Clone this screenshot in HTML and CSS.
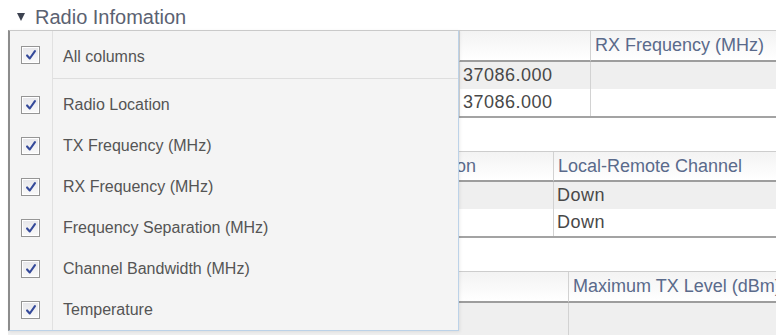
FILE: index.html
```html
<!DOCTYPE html>
<html lang="en">
  <head>
    <meta charset="UTF-8" />
    <meta name="viewport" content="width=device-width, initial-scale=1.0" />
    <title>Radio Information</title>
    <link rel="stylesheet" href="styles.css">
  </head>
  <body>
    <div class="page">
      <div class="section-title">
        <span class="caret"></span>Radio Infomation
      </div>

      <div class="section-body">
        <div class="grid grid-freq">
          <div class="th"></div>
          <div class="th"></div>
          <div class="th">RX Frequency (MHz)</div>
          <div class="td odd"></div>
          <div class="td odd">37086.000</div>
          <div class="td odd"></div>
          <div class="td"></div>
          <div class="td">37086.000</div>
          <div class="td"></div>
        </div>

        <div class="grid grid-sep">
          <div class="th"></div>
          <div class="th">Frequency Separation</div>
          <div class="th">Local-Remote Channel</div>
          <div class="td odd"></div>
          <div class="td odd"></div>
          <div class="td odd">Down</div>
          <div class="td"></div>
          <div class="td"></div>
          <div class="td">Down</div>
        </div>

        <div class="grid grid-level">
          <div class="th"></div>
          <div class="th">Maximum TX Level (dBm)</div>
          <div class="td odd"></div>
          <div class="td odd"></div>
        </div>

        <!-- column chooser dropdown, lies over the tables -->
        <div class="col-menu">
          <div class="opt opt-all">
            <span class="box-cell"><span class="check"><svg viewBox="0 0 16 16"><path d="M3.5 8.5 L6.6 12 L12.5 3.5" /></svg></span></span>
            <span class="label-cell">All columns</span>
          </div>
          <div class="opt-gap"></div>
          <div class="opt">
            <span class="box-cell"><span class="check"><svg viewBox="0 0 16 16"><path d="M3.5 8.5 L6.6 12 L12.5 3.5" /></svg></span></span>
            <span class="label-cell">Radio Location</span>
          </div>
          <div class="opt">
            <span class="box-cell"><span class="check"><svg viewBox="0 0 16 16"><path d="M3.5 8.5 L6.6 12 L12.5 3.5" /></svg></span></span>
            <span class="label-cell">TX Frequency (MHz)</span>
          </div>
          <div class="opt">
            <span class="box-cell"><span class="check"><svg viewBox="0 0 16 16"><path d="M3.5 8.5 L6.6 12 L12.5 3.5" /></svg></span></span>
            <span class="label-cell">RX Frequency (MHz)</span>
          </div>
          <div class="opt">
            <span class="box-cell"><span class="check"><svg viewBox="0 0 16 16"><path d="M3.5 8.5 L6.6 12 L12.5 3.5" /></svg></span></span>
            <span class="label-cell">Frequency Separation (MHz)</span>
          </div>
          <div class="opt">
            <span class="box-cell"><span class="check"><svg viewBox="0 0 16 16"><path d="M3.5 8.5 L6.6 12 L12.5 3.5" /></svg></span></span>
            <span class="label-cell">Channel Bandwidth (MHz)</span>
          </div>
          <div class="opt">
            <span class="box-cell"><span class="check"><svg viewBox="0 0 16 16"><path d="M3.5 8.5 L6.6 12 L12.5 3.5" /></svg></span></span>
            <span class="label-cell">Temperature</span>
          </div>
        </div>
      </div>
    </div>
  </body>
</html>
```

FILE: styles.css
```css
* {
  box-sizing: border-box;
}
body {
  margin: 0;
  background-color: #fff;
  font-family: "Liberation Sans", Arial, sans-serif;
}
.page {
  width: 776px;
  height: 335px;
  overflow: hidden;
}
.section-title {
  height: 30px;
  padding: 3px 0 0 16px;
  line-height: 24px;
  font-size: 20px;
  color: #5b6272;
  display: flex;
  align-items: center;
}
.caret {
  width: 0;
  height: 0;
  border-left: 4.5px solid transparent;
  border-right: 4.5px solid transparent;
  border-top: 8px solid #3c4250;
  margin: 1px 10px 0 1px;
}
.section-body {
  position: relative;
  padding-left: 8px;
}
.grid {
  display: grid;
  width: 900px;
  border-top: 1px solid #cdcdcd;
  border-bottom: 2px solid #a3a3a3;
  font-size: 18px;
}
.grid-freq {
  grid-template-columns: 451px 131px 318px;
}
.grid-sep {
  grid-template-columns: 286px 259px 355px;
  margin-top: 33px;
}
.grid-level {
  grid-template-columns: 560px 340px;
  margin-top: 33px;
  border-bottom: none;
}
.th {
  height: 31px;
  padding: 0 4px;
  line-height: 29px;
  color: #5a6a8b;
  white-space: nowrap;
  background: linear-gradient(#f3f3f3, #fff);
  border-bottom: 2px solid #9d9d9d;
}
.grid-sep .th {
  height: 30px;
  line-height: 28px;
}
.td {
  height: 27px;
  padding: 0 3px;
  line-height: 27px;
  color: #484848;
  letter-spacing: 0.5px;
  white-space: nowrap;
  background-color: #fff;
}
.td.odd {
  background-color: #efefef;
}
.grid-level .td {
  height: 40px;
}
.th + .th,
.td + .td {
  border-left: 1px solid #d2d2d2;
}
.grid-freq .td:nth-child(7),
.grid-sep .td:nth-child(7),
.grid-level .td:nth-child(3) {
  border-left: none;
}

/* column chooser */
.col-menu {
  position: absolute;
  top: 0;
  left: 8px;
  width: 451px;
  height: 301px;
  border-top: 1px solid #c9c9c9;
  border-left: 2px solid #8c8c8c;
  border-right: 1px solid #bcd2e8;
  border-bottom: 1px solid #bcd2e8;
  background:
    linear-gradient(to right, transparent 42px, #e1e1e1 42px, #e1e1e1 43px, transparent 43px),
    #f4f4f4;
  box-shadow: 1px 1px 3px rgba(0, 0, 0, 0.08);
  font-size: 16px;
  color: #555;
}
.opt {
  display: grid;
  grid-template-columns: 43px 1fr;
  height: 41px;
}
.opt-all {
  height: 48px;
}
.opt-all .label-cell {
  border-bottom: 1px solid #dedede;
  padding-top: 4px;
}
.opt-gap {
  height: 5px;
}
.box-cell {
  display: flex;
  align-items: center;
  padding-left: 11px;
}
.label-cell {
  display: flex;
  align-items: center;
  padding-left: 10px;
  white-space: nowrap;
}
.check {
  width: 19px;
  height: 18px;
  border: 1px solid #959595;
  background: linear-gradient(#e6e6ea, #fafafa);
  box-shadow: inset 0 0 0 1px #fff;
  display: flex;
  align-items: center;
  justify-content: center;
}
.check svg {
  width: 14px;
  height: 14px;
}
.check path {
  fill: none;
  stroke: #34499a;
  stroke-width: 2.4;
  stroke-linecap: round;
  stroke-linejoin: round;
}
```
